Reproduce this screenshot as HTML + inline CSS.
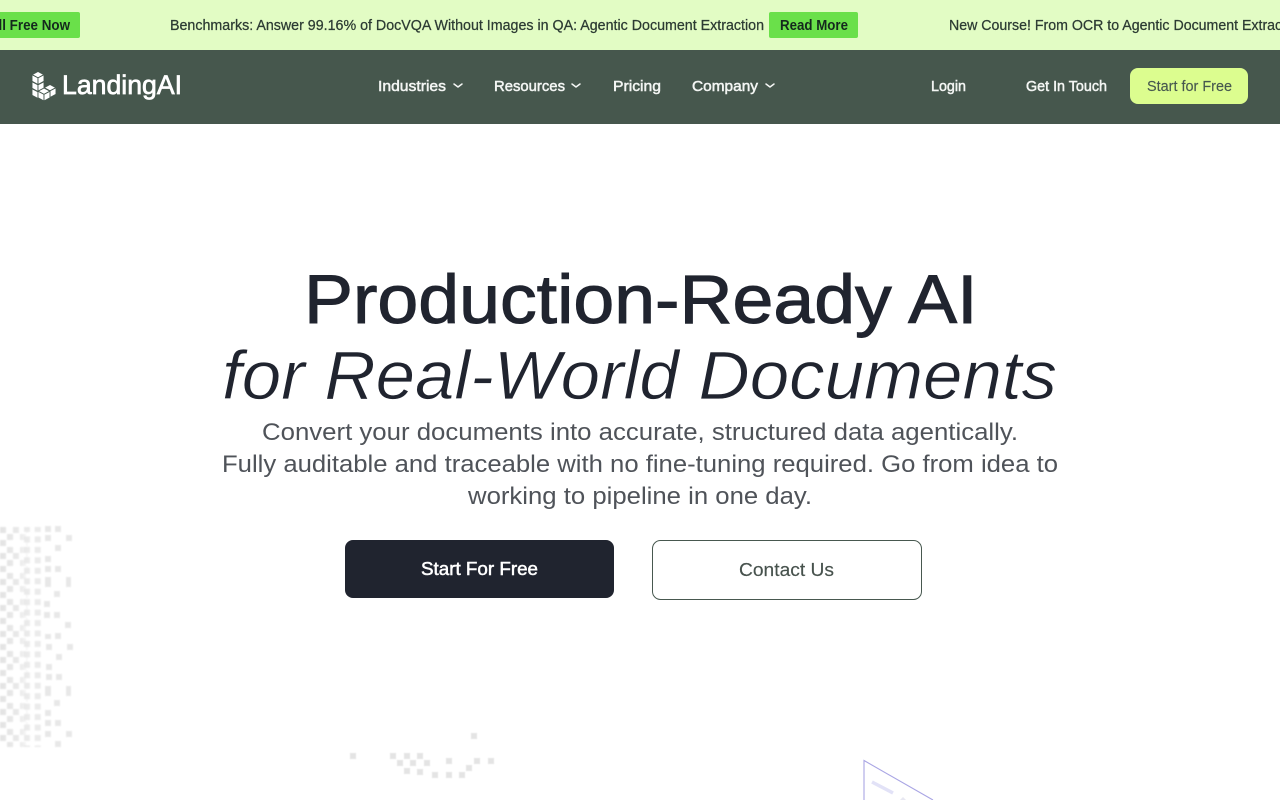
<!DOCTYPE html>
<html lang="en">
<head>
<meta charset="utf-8">
<title>LandingAI</title>
<style>
html,body{margin:0;padding:0;width:1280px;height:800px;overflow:hidden;background:#fff}
svg{display:block}
text{font-family:"Liberation Sans",Arial,sans-serif}
</style>
</head>
<body>
<svg width="1280" height="800" viewBox="0 0 1280 800" xmlns="http://www.w3.org/2000/svg">
<defs>
<pattern id="chk" x="0" y="527" width="26" height="26" patternUnits="userSpaceOnUse">
<rect x="0" y="0" width="6" height="6" fill="#e2e2e2"/>
<rect x="13" y="0" width="6" height="6" fill="#e2e2e2"/>
<rect x="7" y="7" width="6" height="6" fill="#e2e2e2"/>
<rect x="20" y="7" width="6" height="6" fill="#e2e2e2"/>
<rect x="0" y="13" width="6" height="6" fill="#e2e2e2"/>
<rect x="7" y="20" width="6" height="6" fill="#e2e2e2"/>
<rect x="20" y="20" width="6" height="6" fill="#e2e2e2"/>
</pattern>
<pattern id="grid" x="24" y="526" width="10.7" height="10.45" patternUnits="userSpaceOnUse">
<rect x="0" y="0" width="6" height="6" fill="#e6e6e6"/>
</pattern>
<linearGradient id="fade" x1="0" x2="1" y1="0" y2="0">
<stop offset="0" stop-color="#fff" stop-opacity=".95"/>
<stop offset=".7" stop-color="#fff" stop-opacity=".75"/>
<stop offset="1" stop-color="#fff" stop-opacity=".2"/>
</linearGradient>
<mask id="m"><rect x="0" y="527" width="28" height="220" fill="url(#fade)"/></mask>
<filter id="b1" x="-10%" y="-10%" width="120%" height="120%"><feGaussianBlur stdDeviation=".8"/></filter>
<filter id="b2" x="-10%" y="-10%" width="120%" height="120%"><feGaussianBlur stdDeviation=".5"/></filter>
<filter id="b3" x="-10%" y="-10%" width="120%" height="120%"><feGaussianBlur stdDeviation=".25"/></filter>
<g id="cube" stroke="#47584f" stroke-width=".9" fill="#fff" stroke-linejoin="round">
<polygon points="0,0 6,3.2 0,6.4 -6,3.2"/>
<polygon points="-6,3.2 0,6.4 0,13 -6,9.8"/>
<polygon points="6,3.2 0,6.4 0,13 6,9.8"/>
</g>
</defs>

<rect width="1280" height="50" fill="#e2fcc4"/>
<rect x="-20" y="12" width="100" height="26" rx="2" fill="#6ae04a"/>
<text x="-32" y="30" font-size="14.5" font-weight="700" fill="#14291d" textLength="102" lengthAdjust="spacingAndGlyphs">Enroll Free Now</text>
<text x="170" y="30" font-size="14.5" fill="#2c3b33" stroke="#2c3b33" stroke-width=".25" textLength="594" lengthAdjust="spacingAndGlyphs">Benchmarks: Answer 99.16% of DocVQA Without Images in QA: Agentic Document Extraction</text>
<rect x="769" y="12" width="89" height="26" rx="2" fill="#6ae04a"/>
<text x="780" y="30" font-size="14.5" font-weight="700" fill="#14291d" textLength="68" lengthAdjust="spacingAndGlyphs">Read More</text>
<text x="949" y="30" font-size="14.5" fill="#2c3b33" stroke="#2c3b33" stroke-width=".25" textLength="356" lengthAdjust="spacingAndGlyphs">New Course! From OCR to Agentic Document Extraction</text>

<rect y="50" width="1280" height="74" fill="#46574d"/>
<use href="#cube" x="38" y="85.5"/>
<use href="#cube" x="38" y="78.5"/>
<use href="#cube" x="38" y="71.5"/>
<use href="#cube" x="50" y="84.5"/>
<use href="#cube" x="44" y="88"/>
<text x="62" y="94" font-size="27" fill="#fff" stroke="#fff" stroke-width=".7" textLength="120" lengthAdjust="spacingAndGlyphs">LandingAI</text>

<g font-size="15" fill="#f4f6f4" stroke="#f4f6f4" stroke-width=".5">
<text x="378" y="91" textLength="68" lengthAdjust="spacingAndGlyphs">Industries</text>
<text x="494" y="91" textLength="71" lengthAdjust="spacingAndGlyphs">Resources</text>
<text x="613" y="91" textLength="48" lengthAdjust="spacingAndGlyphs">Pricing</text>
<text x="692" y="91" textLength="66" lengthAdjust="spacingAndGlyphs">Company</text>
<text x="931" y="91" textLength="35" lengthAdjust="spacingAndGlyphs">Login</text>
<text x="1026" y="91" textLength="81" lengthAdjust="spacingAndGlyphs">Get In Touch</text>
</g>
<g fill="none" stroke="#f4f6f4" stroke-width="1.5" stroke-linecap="round" stroke-linejoin="round">
<path d="M454 84l4 3 4-3"/>
<path d="M572 84l4 3 4-3"/>
<path d="M766 84l4 3 4-3"/>
</g>
<rect x="1130" y="68" width="118" height="36" rx="8" fill="#dcfd8f"/>
<text x="1147" y="91" font-size="15" fill="#47584f" stroke="#47584f" stroke-width=".15" textLength="85" lengthAdjust="spacingAndGlyphs">Start for Free</text>

<text x="304" y="323" font-size="69" fill="#20242f" stroke="#20242f" stroke-width="1" textLength="673.5" lengthAdjust="spacingAndGlyphs">Production-Ready AI</text>
<text x="222" y="399" font-size="69" font-style="italic" fill="#20242f" stroke="#fff" stroke-width=".7" textLength="835" lengthAdjust="spacingAndGlyphs">for Real-World Documents</text>

<g font-size="24" fill="#4f5359">
<text x="262" y="440" textLength="756" lengthAdjust="spacingAndGlyphs">Convert your documents into accurate, structured data agentically.</text>
<text x="222" y="472" textLength="836" lengthAdjust="spacingAndGlyphs">Fully auditable and traceable with no fine-tuning required. Go from idea to</text>
<text x="468" y="504" textLength="344" lengthAdjust="spacingAndGlyphs">working to pipeline in one day.</text>
</g>

<rect x="345" y="540" width="269" height="58" rx="8" fill="#20242f"/>
<text x="421" y="575" font-size="18" fill="#fff" stroke="#fff" stroke-width=".5" textLength="117" lengthAdjust="spacingAndGlyphs">Start For Free</text>
<rect x="652.5" y="540.5" width="269" height="59" rx="8" fill="#fff" stroke="#47584f"/>
<text x="739" y="576" font-size="18" fill="#47524d" stroke="#47524d" stroke-width=".15" textLength="95" lengthAdjust="spacingAndGlyphs">Contact Us</text>

<g filter="url(#b1)">
<rect x="0" y="527" width="28" height="220" fill="url(#chk)" mask="url(#m)"/>
<rect x="24" y="527" width="19" height="220" fill="url(#grid)" opacity=".8"/>
<g fill="#e8e8e8">
<rect x="45" y="526" width="6" height="6"/><rect x="55" y="526" width="6" height="6"/>
<rect x="45" y="535" width="6" height="6"/><rect x="66" y="535" width="6" height="6"/>
<rect x="55" y="545" width="6" height="6"/><rect x="45" y="556" width="6" height="6"/>
<rect x="45" y="566" width="6" height="6"/><rect x="55" y="566" width="6" height="6"/>
<rect x="45" y="577" width="6" height="10"/><rect x="66" y="577" width="5" height="10"/>
<rect x="54" y="591" width="6" height="6"/><rect x="44" y="601" width="6" height="6"/>
<rect x="44" y="612" width="6" height="6"/><rect x="54" y="612" width="6" height="6"/>
<rect x="65" y="622" width="6" height="6"/><rect x="45" y="634" width="6" height="5"/>
<rect x="55" y="633" width="6" height="6"/><rect x="46" y="644" width="6" height="6"/>
<rect x="67" y="644" width="6" height="6"/><rect x="56" y="654" width="6" height="6"/>
<rect x="46" y="664" width="6" height="6"/><rect x="46" y="674" width="6" height="6"/>
<rect x="56" y="674" width="6" height="6"/><rect x="45" y="686" width="6" height="10"/>
<rect x="66" y="686" width="5" height="10"/><rect x="54" y="700" width="6" height="6"/>
<rect x="45" y="710" width="6" height="6"/><rect x="45" y="720" width="6" height="6"/>
<rect x="55" y="720" width="6" height="6"/><rect x="45" y="731" width="6" height="6"/>
<rect x="66" y="731" width="6" height="6"/><rect x="55" y="741" width="6" height="6"/>
</g>
</g>

<g fill="#e4e4e4" filter="url(#b2)">
<rect x="471" y="733" width="6" height="6"/><rect x="350" y="753" width="6" height="6"/>
<rect x="390" y="753" width="6" height="6"/><rect x="404" y="753" width="6" height="6"/>
<rect x="417" y="753" width="6" height="6"/><rect x="397" y="760" width="6" height="6"/>
<rect x="410" y="760" width="6" height="6"/><rect x="424" y="760" width="6" height="6"/>
<rect x="446" y="758" width="6" height="6"/><rect x="474" y="758" width="6" height="6"/>
<rect x="488" y="758" width="6" height="6"/><rect x="466" y="765" width="6" height="6"/>
<rect x="404" y="768" width="6" height="6"/><rect x="417" y="769" width="6" height="6"/>
<rect x="432" y="772" width="6" height="6"/><rect x="446" y="772" width="6" height="6"/>
<rect x="459" y="772" width="6" height="6"/>
</g>

<g filter="url(#b3)">
<path d="M864 800V760.5L933 800" fill="none" stroke="#a9a5e4" stroke-width="1.1"/>
<path d="M872 782L893 793" stroke="#e2e2f7" stroke-width="3.5" fill="none"/>
<path d="M900 800L903 797L906 800Z" fill="#e8e8f2"/>
</g>
</svg>
</body>
</html>
